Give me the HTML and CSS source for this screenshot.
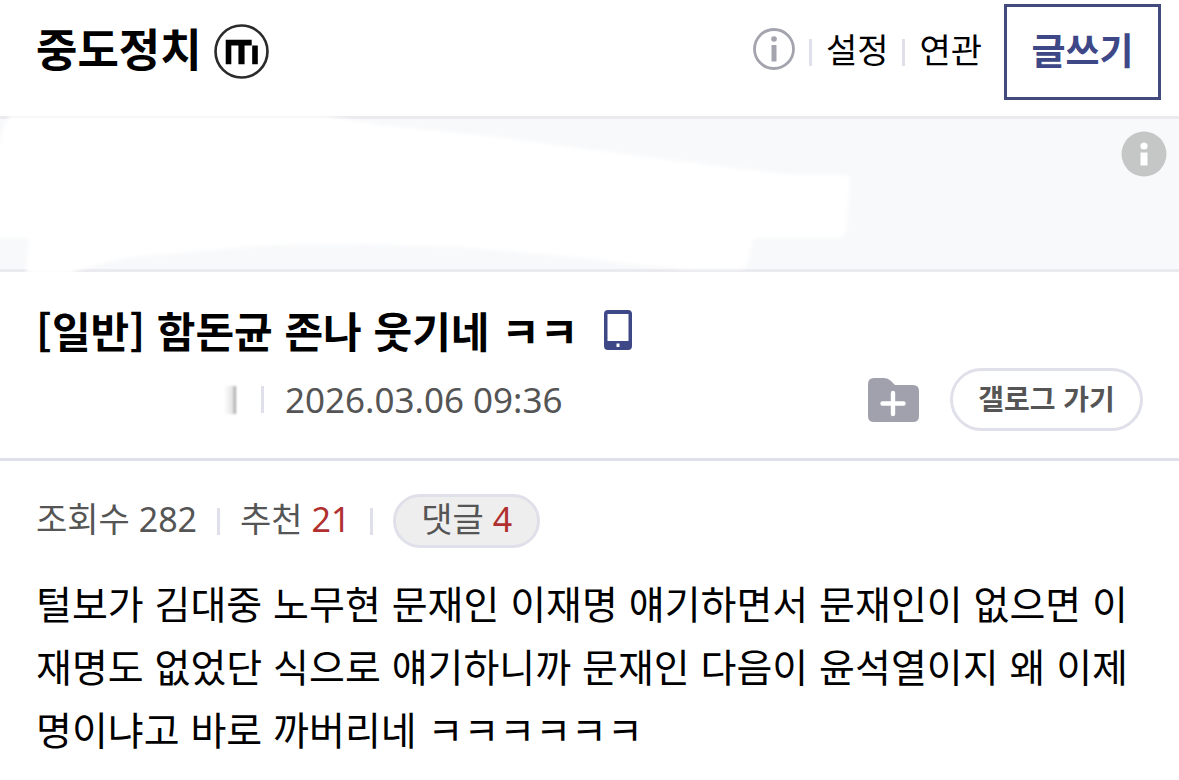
FILE: index.html
```html
<!DOCTYPE html>
<html lang="ko">
<head>
  <meta charset="UTF-8" />
  <meta name="viewport" content="width=device-width, initial-scale=1" />
  <title>중도정치 - 함돈균 존나 웃기네 ㅋㅋ</title>
  <link rel="stylesheet" href="styles.css">
</head>
<body>
  <header class="top">
    <h1 class="gallery">
      <a href="#">중도정치</a>
      <svg class="minor" viewBox="0 0 54 54" aria-hidden="true">
        <circle cx="27" cy="27" r="25.5" fill="#fff" stroke="#2b2b2b" stroke-width="2.6" />
        <path d="M11.5 15.5H37V21H43V39.5H37.5V21H30V39.5H24V21H17V39.5H11.5Z" fill="#000" />
      </svg>
    </h1>
    <nav class="menu">
      <a href="#" class="info" aria-label="안내">
        <svg viewBox="0 0 42 42" aria-hidden="true">
          <circle cx="21" cy="21" r="19.5" fill="none" stroke="#a3a4ae" stroke-width="2.8" />
          <circle cx="21" cy="11" r="2.8" fill="#a3a4ae" />
          <path d="M18.5 17H23.5V33.5H18.5Z" fill="#a3a4ae" />
        </svg>
      </a>
      <span class="bar"></span>
      <a href="#">설정</a>
      <span class="bar"></span>
      <a href="#">연관</a>
      <button type="button" class="write">글쓰기</button>
    </nav>
  </header>

  <section class="banner">
    <svg class="cover" viewBox="0 0 860 160" aria-hidden="true">
      <path d="M10 -1H325L380 8L488 19L717 49L786 57L846 58Q851 59 850 66L846 115Q845 121 838 121H753L748 146Q746 152 738 152H690L640 148L585 141L459 130L370 127L270 128L143 139Q100 144 69 157H26L29 121H-6V50L4 8Z" fill="#fff" />
    </svg>
    <button type="button" class="adinfo" aria-label="광고 정보">
      <svg viewBox="0 0 46 46" aria-hidden="true">
        <circle cx="23" cy="23" r="22.5" fill="#c5c6c6" />
        <circle cx="23" cy="15" r="3.6" fill="#fff" />
        <path d="M19.5 21.5H26.5V34.5H19.5Z" fill="#fff" />
      </svg>
    </button>
  </section>

  <article>
    <div class="head">
      <h2 class="subject">
        [일반] 함돈균 존나 웃기네 ㅋㅋ
        <svg class="phone" viewBox="0 0 28 40" aria-hidden="true">
          <path fill-rule="evenodd" d="M4 0H24Q28 0 28 4V36Q28 40 24 40H4Q0 40 0 36V4Q0 0 4 0ZM3.5 4V31H24.5V4ZM12.5 33.5V37H15.5V33.5Z" fill="#3e4887" />
        </svg>
      </h2>
      <div class="meta">
        <span class="writer"><i class="smudge"></i></span>
        <span class="bar"></span>
        <time datetime="2026-03-06T09:36">2026.03.06 09:36</time>
        <button type="button" class="folder" aria-label="갤러리 담기">
          <svg viewBox="0 0 51 44" aria-hidden="true">
            <path d="M6 0H16Q20 0 23 3L27 7H45Q51 7 51 13V38Q51 44 45 44H6Q0 44 0 38V6Q0 0 6 0Z" fill="#a0a1ad" />
            <path d="M25 15V36M14.5 25.5H35.5" stroke="#fff" stroke-width="4.4" stroke-linecap="round" />
          </svg>
        </button>
        <a href="#" class="gallog">갤로그 가기</a>
      </div>
    </div>

    <div class="counts">
      <span>조회수 282</span>
      <span class="bar"></span>
      <span>추천 <em>21</em></span>
      <span class="bar"></span>
      <a href="#" class="reply">댓글 <em>4</em></a>
    </div>

    <p class="content">털보가 김대중 노무현 문재인 이재명 얘기하면서 문재인이 없으면 이재명도 없었단 식으로 얘기하니까 문재인 다음이 윤석열이지 왜 이제명이냐고 바로 까버리네 ㅋㅋㅋㅋㅋㅋ</p>
  </article>
</body>
</html>
```
FILE: styles.css
```css
* { box-sizing: border-box; }
body { margin: 0; background: #fff; color: #000; font-family: "Noto Sans CJK KR", sans-serif; }
a { color: inherit; text-decoration: none; }
button { padding: 0; border: 0; background: none; font-family: inherit; cursor: pointer; }
svg { display: block; }
em { font-style: normal; color: #b03030; }
.bar { flex: none; width: 3px; height: 27px; background: #e0e0ea; }

.top { display: flex; justify-content: space-between; height: 119px; padding: 4px 18px 0 36px; border-bottom: 3px solid #eaeaef; }
.gallery { display: flex; align-items: center; gap: 12px; height: 94px; margin: 0; font-size: 45px; line-height: 60px; font-weight: 700; }
.gallery a { padding-bottom: 6px; }
.minor { width: 55px; height: 55px; }
.menu { display: flex; align-items: center; gap: 14px; height: 96px; font-size: 34px; line-height: 48px; }
.menu > a { padding-bottom: 6px; }
.info svg { width: 42px; height: 42px; }
.write { width: 157px; height: 96px; margin-left: 8px; padding-bottom: 6px; border: 3px solid #434b7d; color: #3e4887; font-size: 37px; font-weight: 700; }

.banner { position: relative; height: 153px; background: #f8f9fb; border-bottom: 3px solid #eaeaef; }
.cover { position: absolute; top: -2px; left: 0; width: 860px; height: 160px; overflow: visible; filter: blur(2px); }
.adinfo { position: absolute; top: 12px; right: 12px; }
.adinfo svg { width: 46px; height: 46px; }

.head { padding: 28px 36px 27px; border-bottom: 3px solid #e0e0ea; }
.subject { display: flex; align-items: center; gap: 26px; margin: 0; font-size: 42px; line-height: 60px; font-weight: 700; }
.phone { width: 28px; height: 40px; }
.meta { display: flex; align-items: center; height: 63px; margin-top: 8px; color: #555; }
.writer { width: 200px; margin-right: 25px; }
.smudge { display: block; width: 12px; height: 28px; margin-left: auto; background: linear-gradient(to right, #fff, #e4e4e4 70%, #999); filter: blur(1px); }
.meta time { margin-left: 21px; font-family: "Noto Sans", sans-serif; font-size: 35px; line-height: 48px; }
.folder { margin-left: auto; }
.folder svg { width: 51px; height: 44px; }
.gallog { width: 193px; height: 63px; margin-left: 31px; border: 3px solid #e0e0ea; border-radius: 32px; text-align: center; font-size: 28px; line-height: 55px; font-weight: 700; }

.counts { display: flex; align-items: center; gap: 20px; padding: 33px 36px 0; color: #555; font-family: "Noto Sans", "Noto Sans CJK KR", sans-serif; font-size: 34px; line-height: 48px; }
.counts > span:not(.bar) { padding-bottom: 4px; }
.reply { padding: 0 25px; border: 3px solid #e0e0ea; border-radius: 27px; background: #eee; line-height: 44px; padding-bottom: 4px; }
.content { margin: 23px 36px; font-size: 39px; line-height: 63px; word-break: break-all; }
```
